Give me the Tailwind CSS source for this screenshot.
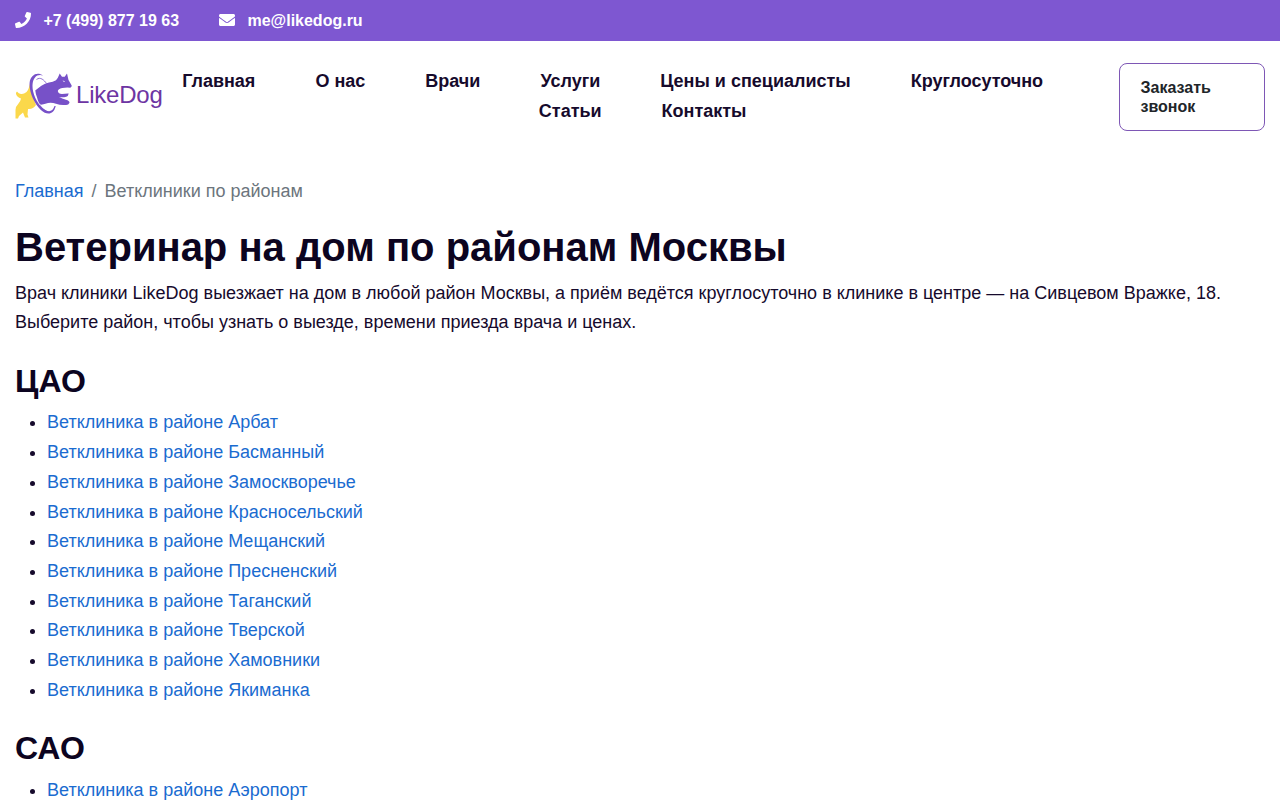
<!DOCTYPE html>
<html lang="ru">
<head>
    <meta charset="UTF-8">
    <meta name="viewport" content="width=device-width, initial-scale=1.0">
    <title>Ветеринар на дом по районам Москвы</title>
    <script src="https://cdn.jsdelivr.net/npm/@tailwindcss/browser@4"></script>
</head>
<body class="h-screen overflow-hidden bg-white font-['Liberation_Sans',sans-serif] text-[18px] leading-[29.7px] text-[#160a2c]">

    <!-- Top bar -->
    <div class="flex h-[41px] items-center gap-10 bg-[#7e57d1] px-[15px] text-base font-bold text-white">
        <a href="tel:+74998771963" class="flex items-center gap-[12.4px]">
            <svg class="-mt-0.5 size-4" viewBox="0 0 512 512" fill="currentColor">
                <path d="M493.4 24.6l-104-24c-11.3-2.6-22.9 3.3-27.5 13.9l-48 112c-4.2 9.8-1.4 21.3 6.9 28l60.6 49.6c-36 76.7-98.9 140.5-177.2 177.2l-49.6-60.6c-6.8-8.3-18.2-11.1-28-6.9l-112 48C3.9 366.5-2 378.1.6 389.4l24 104C27.1 504.2 36.7 512 48 512c256.1 0 464-207.5 464-464 0-11.2-7.7-20.9-18.6-23.4z"/>
            </svg>
            +7 (499) 877 19 63
        </a>
        <a href="mailto:me@likedog.ru" class="flex items-center gap-[12.4px]">
            <svg class="-mt-0.5 size-4" viewBox="0 0 512 512" fill="currentColor">
                <path d="M502.3 190.8c3.9-3.1 9.7-.2 9.7 4.7V400c0 26.500-21.500 48-48 48H48c-26.500 0-48-21.500-48-48V195.600c0-5 5.700-7.800 9.700-4.700 22.400 17.400 52.100 39.500 154.100 113.600 21.100 15.400 56.700 47.800 92.200 47.600 35.700.3 72-32.800 92.300-47.600 102-74.100 131.600-96.300 154-113.700zM256 320c23.200.4 56.600-29.200 73.400-41.400 132.700-96.300 142.800-104.700 173.400-128.700 5.800-4.500 9.200-11.500 9.200-18.900v-19c0-26.500-21.500-48-48-48H48c-26.500 0-48 21.500-48 48v19c0 7.400 3.400 14.300 9.200 18.900 30.600 23.900 40.700 32.400 173.400 128.700 16.800 12.200 50.200 41.800 73.400 41.400z"/>
            </svg>
            me@likedog.ru
        </a>
    </div>

    <!-- Header -->
    <header class="flex items-start px-[15px] pt-[22px]">
        <a href="/" class="mt-[9px] flex h-12 w-[167px] shrink-0 items-start">
            <svg class="h-12 w-[58px] shrink-0" viewBox="15 72 58 48">
                <!-- tail and hind legs -->
                <path fill="#fbd84b" d="M29.500 84q-.5 5.500-3 8-3 2.500-5.500 2-2.500-.5-4-2.500-1.500 1-1 2.500 1 3 5 4.500-.5 3-2.500 5-3 3-3 6.500l0 8.500h2.500l1-2.500 4-3.500 2 5h3.500l-1-3 .5-5.500q5 .5 8-4l-3.500-9z"/>
                <!-- hoop -->
                <path fill="#7751c8" d="M43 75.500C37 71.500 30.500 75 29.600 83c-.6 9 4.600 20.500 11.300 27 6 5.500 12.800 5 14.800-4l-1.200 0c-2 6.500-7 6.500-12 2C36 102 31.800 92 32.600 84c.7-7 4.900-10.500 10.400-8.500z"/>
                <path d="M36.500 79.500c4-3 7.500.5 10 4M39.500 105c3 4 6 6.500 9 7" fill="none" stroke="#7751c8" stroke-width=".8"/>
                <!-- dog -->
                <path fill="#7751c8" d="M35.200 90.500L41 86q4-3 8-3.600 4-.2 7-2.200 1.800-1.700 2.500-4l1.200-2.700 2.300 3.300h2.700l2.300-3.300 1.500 6.500 3.200 5.500q.3 1.500-1.500 2.200-4-.5-8 .4-4 1-4.400 2.900.5 2.800 4.200 3.100 3.500-.6 6.700-.5-.3 2.500-2.500 3.200-3.500.9-7.200.2 3 1.700 7 2.700 3.500.8 3.500 3.100-1 2.500-4 2.200-5 .5-9.500-1.200-4-1.700-8-.9-3.500.9-7 1.900-2.500-1.300-3.800-6.800-1.600-4-2-8z"/>
                <path fill="#fff" d="M62.500 80.500l2.500.7-1 .8z"/>
            </svg>
            <span class="ml-[3px] mt-[9px] text-[24px] leading-[28px] tracking-[-0.2px] text-[#6d35a3]">LikeDog</span>
        </a>
        <nav class="w-[921.300px] pt-[3px]">
            <ul class="flex flex-wrap justify-center font-bold leading-[30px]">
                <li class="mr-[60px]"><a href="#">Главная</a></li>
                <li class="mr-[60px]"><a href="#">О нас</a></li>
                <li class="mr-[60px]"><a href="#">Врачи</a></li>
                <li class="mr-[60px]"><a href="#">Услуги</a></li>
                <li class="mr-[60px]"><a href="#">Цены и специалисты</a></li>
                <li class="mr-[60px]"><a href="#">Круглосуточно</a></li>
                <li class="mr-[60px]"><a href="#">Статьи</a></li>
                <li><a href="#">Контакты</a></li>
            </ul>
        </nav>
        <button class="ml-auto h-[68px] w-[146px] rounded-lg border border-[#7e57b5] px-[20.5px] text-left text-base leading-[19.2px] font-bold text-[#212529]">Заказать звонок</button>
    </header>

    <main class="px-[15px] pt-[46px]">
        <!-- Breadcrumbs -->
        <ol class="flex gap-2 text-[#6c757d]">
            <li><a href="#" class="text-[#1a6bd0]">Главная</a></li>
            <li>/</li>
            <li>Ветклиники по районам</li>
        </ol>

        <h1 class="mt-4 text-[40px] leading-[48px] font-bold text-[#0c0420]">Ветеринар на дом по районам Москвы</h1>
        <p class="mt-2 leading-[29px]">Врач клиники LikeDog выезжает на дом в любой район Москвы, а приём ведётся круглосуточно в клинике в центре — на Сивцевом Вражке, 18. Выберите район, чтобы узнать о выезде, времени приезда врача и ценах.</p>

        <h2 class="mt-[25.3px] text-[32px] leading-[38.4px] font-bold text-[#0c0420]">ЦАО</h2>
        <ul class="mt-2 list-disc pl-8 [&_a]:text-[#1a6bd0]">
            <li><a href="#">Ветклиника в районе Арбат</a></li>
            <li><a href="#">Ветклиника в районе Басманный</a></li>
            <li><a href="#">Ветклиника в районе Замоскворечье</a></li>
            <li><a href="#">Ветклиника в районе Красносельский</a></li>
            <li><a href="#">Ветклиника в районе Мещанский</a></li>
            <li><a href="#">Ветклиника в районе Пресненский</a></li>
            <li><a href="#">Ветклиника в районе Таганский</a></li>
            <li><a href="#">Ветклиника в районе Тверской</a></li>
            <li><a href="#">Ветклиника в районе Хамовники</a></li>
            <li><a href="#">Ветклиника в районе Якиманка</a></li>
        </ul>

        <h2 class="mt-[23.9px] text-[32px] leading-[38.4px] font-bold text-[#0c0420]">САО</h2>
        <ul class="mt-2 list-disc pl-8 [&_a]:text-[#1a6bd0]">
            <li><a href="#">Ветклиника в районе Аэропорт</a></li>
        </ul>
    </main>

</body>
</html>
